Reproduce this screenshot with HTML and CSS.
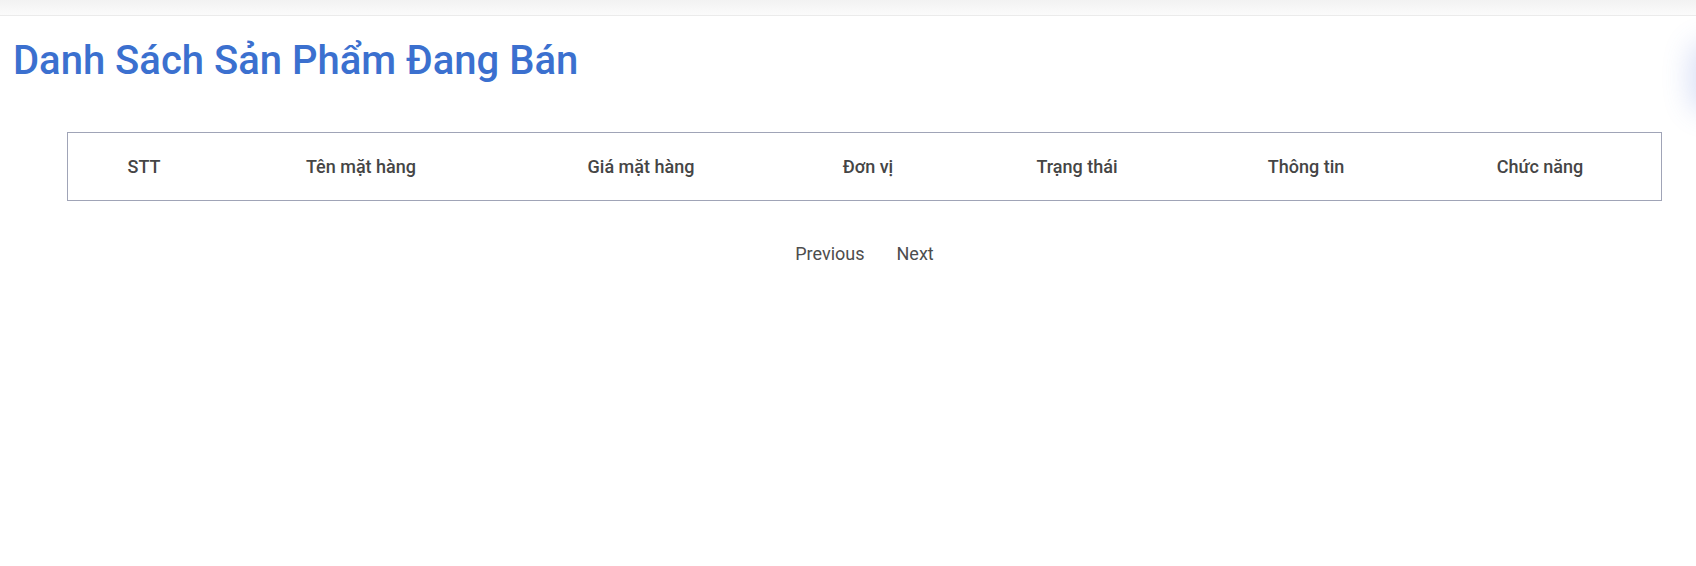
FILE: index.html
```html
<!DOCTYPE html>
<html lang="vi">
<head>
<meta charset="utf-8">
<title>Danh Sách Sản Phẩm Đang Bán</title>
<link rel="stylesheet" href="styles.css">
</head>
<body>
<div class="topbar"></div>
<div class="side-glow"></div>
<main class="page">
  <h1 class="title">Danh Sách Sản Phẩm Đang Bán</h1>
  <section class="table-wrap">
    <div class="table-head">
      <div class="th">STT</div>
      <div class="th">Tên mặt hàng</div>
      <div class="th">Giá mặt hàng</div>
      <div class="th">Đơn vị</div>
      <div class="th">Trạng thái</div>
      <div class="th">Thông tin</div>
      <div class="th th-last">Chức năng</div>
    </div>
    <nav class="pager">
      <span class="pager-link">Previous</span>
      <span class="pager-link">Next</span>
    </nav>
  </section>
</main>
</body>
</html>
```
FILE: styles.css
```css
html, body {
  margin: 0;
  padding: 0;
  background: #ffffff;
}
body {
  font-family: Roboto, "Liberation Sans", sans-serif;
  font-size: 18px;
  line-height: 1.5;
  color: #444444;
  overflow: hidden;
}
.topbar {
  height: 15px;
  background: linear-gradient(to bottom, #f2f2f2, #fbfbfb);
  border-bottom: 1px solid #ebebeb;
}
.side-glow {
  position: fixed;
  top: 48px;
  right: -50px;
  width: 50px;
  height: 58px;
  border-radius: 10px;
  box-shadow: 0 0 28px 6px rgba(80, 115, 215, 0.22);
}
.page {
  padding: 0;
}
.title {
  margin: 21px 0 0 13px;
  font-size: 40px;
  font-weight: 500;
  line-height: 48px;
  color: #3b70cf;
}
.table-wrap {
  margin: 47px 34px 0 67px;
}
.table-head {
  display: grid;
  grid-template-columns: 152px 282px 278px 176px 242px 216px 1fr;
  align-items: center;
  height: 67px;
  border: 1px solid #a0a4b7;
}
.th {
  text-align: center;
  font-weight: 500;
  line-height: 27px;
  color: #454545;
  white-space: nowrap;
}
.th-last {
  padding-left: 5px;
}
.pager {
  display: flex;
  justify-content: center;
  gap: 32px;
  margin-top: 39px;
  line-height: 27px;
  color: #4d4d4d;
}
.pager-link {
  cursor: pointer;
}
```
